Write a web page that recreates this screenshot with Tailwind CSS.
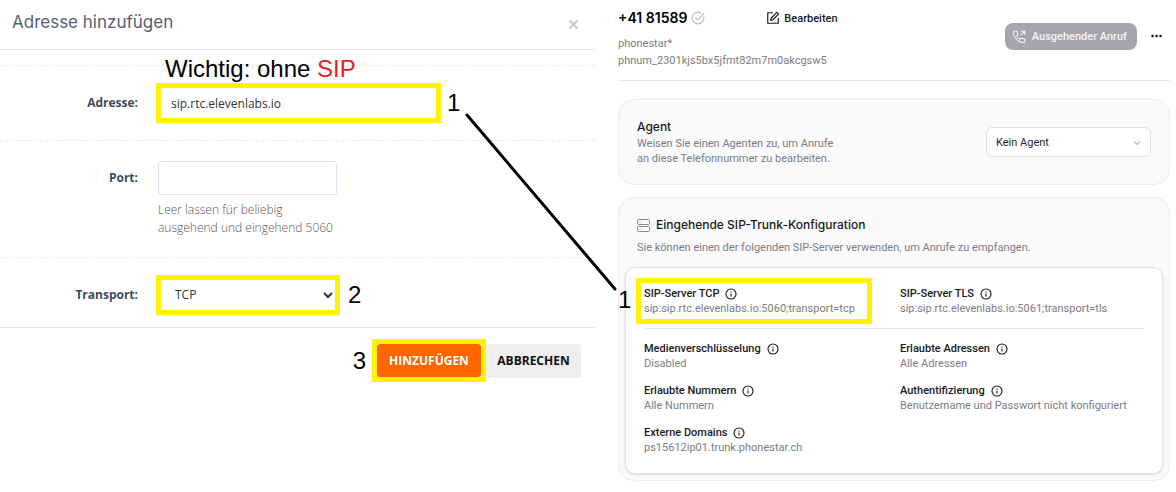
<!DOCTYPE html>
<html lang="de">
<head>
  <meta charset="UTF-8" />
  <meta name="viewport" content="width=device-width, initial-scale=1.0" />
  <title>SIP-Trunk einrichten</title>
  <script src="https://cdn.jsdelivr.net/npm/@tailwindcss/browser@4"></script>
</head>
<body class="bg-white">

<!-- Icons -->
<svg class="hidden">
  <symbol id="info" viewBox="0 0 24 24" fill="none" stroke="currentColor" stroke-width="2.2">
    <circle cx="12" cy="12" r="10" />
    <path d="M12 11v6M12 7v2" />
  </symbol>
</svg>

<main class="relative grid grid-cols-[595fr_581fr]">

  <!-- Adresse hinzufügen -->
  <section class="font-['Open_Sans',sans-serif] text-[12px] text-[#3f4a57]">
    <header class="flex h-[50px] items-center justify-between border-b border-[#e0e5ee] pr-4 pl-3">
      <h1 class="pb-1 font-['Inter',sans-serif] text-[17px] text-[#55606e]">Adresse hinzufügen</h1>
      <button type="button" aria-label="Schliessen" class="text-[#c6c6c6]">
        <svg class="size-[11px]" viewBox="0 0 11 11" fill="none" stroke="currentColor" stroke-width="2"><path d="M1.5 1.5l8 8M9.5 1.5l-8 8" /></svg>
      </button>
    </header>

    <form>
      <div class="pt-[15px]">
        <div class="relative grid grid-cols-[138px_1fr] gap-x-[18px] border-t border-dashed border-[#ebebeb] py-[17px]">
          <p class="absolute -top-[13px] left-[165px] font-['Liberation_Sans',sans-serif] text-2xl leading-8 text-black">Wichtig: ohne <span class="text-[#ed1c24]">SIP</span></p>
          <label for="adresse" class="self-center text-right font-bold">Adresse:</label>
          <div class="flex items-center gap-1.5">
            <input id="adresse" type="text" value="sip.rtc.elevenlabs.io" class="h-10 w-[285px] border-[5px] border-[#fff200] px-2.5 text-[#333] outline-none" />
            <span class="font-['Liberation_Sans',sans-serif] text-2xl text-black">1</span>
          </div>
        </div>

        <div class="grid grid-cols-[138px_1fr] gap-x-[18px] border-t border-dashed border-[#ebebeb] py-5">
          <label for="port" class="h-[34px] text-right leading-[34px] font-bold">Port:</label>
          <div class="px-0.5">
            <input id="port" type="text" class="block h-[34px] w-[179px] rounded-[3px] border border-[#d8e2f1] px-3 outline-none" />
            <p class="mt-1.5 w-[180px] leading-[18px] font-light text-[#555]">Leer lassen für beliebig ausgehend und eingehend 5060</p>
          </div>
        </div>

        <div class="grid grid-cols-[138px_1fr] gap-x-[18px] border-t border-dashed border-[#ebebeb] pt-[17px] pb-3">
          <label for="transport" class="self-center text-right font-bold">Transport:</label>
          <div class="flex items-center gap-2">
            <div class="relative">
              <select id="transport" class="block h-10 w-[184px] appearance-none border-[5px] border-[#fff200] bg-white px-3.5 text-[#333]">
                <option>TCP</option>
                <option>UDP</option>
                <option>TLS</option>
              </select>
              <svg class="pointer-events-none absolute top-4 right-[7px] h-2 w-2.5" viewBox="0 0 10 8" fill="none" stroke="#333" stroke-width="2"><path d="M1 2l4 4 4-4" /></svg>
            </div>
            <span class="font-['Liberation_Sans',sans-serif] text-2xl text-black">2</span>
          </div>
        </div>
      </div>

      <footer class="flex items-center justify-end border-t border-[#dfe5ee] pt-[11px] pr-3.5">
        <span class="mr-1.5 font-['Liberation_Sans',sans-serif] text-2xl text-black">3</span>
        <div class="border-[5px] border-[#fff200] bg-white">
          <button type="submit" class="block h-[33px] w-[104px] rounded-[3px] bg-[#ff6600] font-bold text-white">HINZUFÜGEN</button>
        </div>
        <button type="button" class="h-[34px] w-[95px] rounded-r-[3px] bg-[#efefef] font-bold text-[#111]">ABBRECHEN</button>
      </footer>
    </form>
  </section>

  <!-- Telefonnummer -->
  <section class="pr-1.5 pl-[23px] font-['Roboto',sans-serif] text-[11px] leading-[15px] text-[#7c7c84]">
    <header class="flex h-[81px] items-start justify-between border-b border-[#e8e8ea] pt-2">
      <div>
        <div class="flex h-5 items-center">
          <h2 class="font-['Inter',sans-serif] text-sm font-semibold text-black">+41 81589</h2>
          <svg class="ml-1 size-3.5 text-[#bdbdc2]" viewBox="0 0 24 24" fill="none" stroke="currentColor" stroke-width="2" stroke-linecap="round" stroke-linejoin="round"><path d="M21.8 10A10 10 0 1 1 17 3.3" /><path d="M8 11.5l3.5 3.5L22 4.5" /></svg>
          <button type="button" class="ml-[61px] flex items-center gap-1 font-medium text-[#18181b]">
            <svg class="size-3.5" viewBox="0 0 24 24" fill="none" stroke="currentColor" stroke-width="2" stroke-linejoin="round"><path d="M12 3H3v18h18v-9" /><path d="M18.5 2.5l3 3L12 15l-4 1 1-4z" /></svg>
            Bearbeiten
          </button>
        </div>
        <p class="mt-2">phonestar*</p>
        <p class="mt-0.5">phnum_2301kjs5bx5jfmt82m7m0akcgsw5</p>
      </div>
      <div class="flex items-center gap-3.5 pt-[15px] pr-2">
        <button type="button" class="flex h-[27px] items-center gap-1.5 rounded-lg bg-[#a5a5ae] pr-2.5 pl-[7px] font-medium text-[#f4f4f5]">
          <svg class="size-3.5" viewBox="0 0 24 24" fill="none" stroke="currentColor" stroke-width="1.8" stroke-linecap="round" stroke-linejoin="round"><path d="M15 9l7-7M16 2h6v6" /><path d="M22 16.9v3a2 2 0 0 1-2.2 2A19.8 19.8 0 0 1 2.1 4.2 2 2 0 0 1 4.1 2h3a2 2 0 0 1 2 1.7c.1 1 .4 1.9.7 2.8a2 2 0 0 1-.5 2.1L8.1 9.9a16 16 0 0 0 6 6l1.2-1.2a2 2 0 0 1 2.1-.5c.9.3 1.8.6 2.8.7a2 2 0 0 1 1.8 2z" /></svg>
          Ausgehender Anruf
        </button>
        <button type="button" aria-label="Mehr" class="text-black">
          <svg class="h-3 w-[11px]" viewBox="0 0 11 12" fill="currentColor"><circle cx="1.5" cy="5" r="1.2" /><circle cx="5.5" cy="5" r="1.2" /><circle cx="9.5" cy="5" r="1.2" /></svg>
        </button>
      </div>
    </header>

    <div class="mt-[18px] flex h-[86px] items-center justify-between rounded-2xl border border-[#ececee] bg-[#fafafa] px-[18px]">
      <div>
        <label for="agent" class="block font-['Inter',sans-serif] text-[12px] leading-[18px] font-medium text-[#18181b]">Agent</label>
        <p class="w-[205px]">Weisen Sie einen Agenten zu, um Anrufe an diese Telefonnummer zu bearbeiten.</p>
      </div>
      <div class="relative">
        <select id="agent" class="block h-[30px] w-[165px] appearance-none rounded-md border border-[#e2e2e5] bg-white px-[9px] text-[#27272a]">
          <option>Kein Agent</option>
        </select>
        <svg class="pointer-events-none absolute top-3 right-2.5 h-2 w-2" viewBox="0 0 8 8" fill="none" stroke="#8a8a90"><path d="M1 2.5l3 3 3-3" /></svg>
      </div>
    </div>

    <div class="mt-3 rounded-2xl border border-[#ececee] bg-[#fafafa] px-1.5 pt-[17px] pb-1.5">
      <div class="px-3">
        <h3 class="flex items-center gap-1.5 font-['Inter',sans-serif] text-[12px] leading-5 font-medium text-[#18181b]">
          <svg class="size-[13px] text-[#88888e]" viewBox="0 0 13 13" fill="none" stroke="currentColor"><rect x=".5" y=".5" width="12" height="5" rx="1" /><rect x=".5" y="7.5" width="12" height="5" rx="1" /><path d="M2.5 3h1M2.5 10h1" /></svg>
          Eingehende SIP-Trunk-Konfiguration
        </h3>
        <p class="mt-[5px]">Sie können einen der folgenden SIP-Server verwenden, um Anrufe zu empfangen.</p>
      </div>

      <div class="mt-3 rounded-[10px] border border-[#e4e4e7] bg-white p-[18px] shadow-sm">
        <dl class="grid grid-cols-2 gap-x-3 border-b border-[#e8e8ea] pb-3">
          <div class="relative">
            <div class="absolute -top-2 -left-2 h-[46px] w-[236px] border-[5px] border-[#fff200]"></div>
            <dt class="flex items-center gap-1.5 font-medium text-[#18181b]">SIP-Server TCP <svg class="size-3"><use href="#info" /></svg></dt>
            <dd>sip:sip.rtc.elevenlabs.io:5060;transport=tcp</dd>
          </div>
          <div>
            <dt class="flex items-center gap-1.5 font-medium text-[#18181b]">SIP-Server TLS <svg class="size-3"><use href="#info" /></svg></dt>
            <dd>sip:sip.rtc.elevenlabs.io:5061;transport=tls</dd>
          </div>
        </dl>
        <dl class="grid grid-cols-2 gap-3 pt-3">
          <div>
            <dt class="flex items-center gap-1.5 font-medium text-[#18181b]">Medienverschlüsselung <svg class="size-3"><use href="#info" /></svg></dt>
            <dd>Disabled</dd>
          </div>
          <div>
            <dt class="flex items-center gap-1.5 font-medium text-[#18181b]">Erlaubte Adressen <svg class="size-3"><use href="#info" /></svg></dt>
            <dd>Alle Adressen</dd>
          </div>
          <div>
            <dt class="flex items-center gap-1.5 font-medium text-[#18181b]">Erlaubte Nummern <svg class="size-3"><use href="#info" /></svg></dt>
            <dd>Alle Nummern</dd>
          </div>
          <div>
            <dt class="flex items-center gap-1.5 font-medium text-[#18181b]">Authentifizierung <svg class="size-3"><use href="#info" /></svg></dt>
            <dd>Benutzername und Passwort nicht konfiguriert</dd>
          </div>
          <div>
            <dt class="flex items-center gap-1.5 font-medium text-[#18181b]">Externe Domains <svg class="size-3"><use href="#info" /></svg></dt>
            <dd>ps15612ip01.trunk.phonestar.ch</dd>
          </div>
        </dl>
      </div>
    </div>
  </section>

  <!-- Verbindung zwischen den beiden Feldern -->
  <svg class="pointer-events-none absolute top-[112px] left-[464px] h-[180px] w-[154px]" viewBox="0 0 154 180" stroke="#000" stroke-width="3" stroke-linecap="round"><path d="M3 3l148 174" /></svg>
  <span class="absolute top-[284px] left-[618px] font-['Liberation_Sans',sans-serif] text-2xl text-black">1</span>
</main>

</body>
</html>
